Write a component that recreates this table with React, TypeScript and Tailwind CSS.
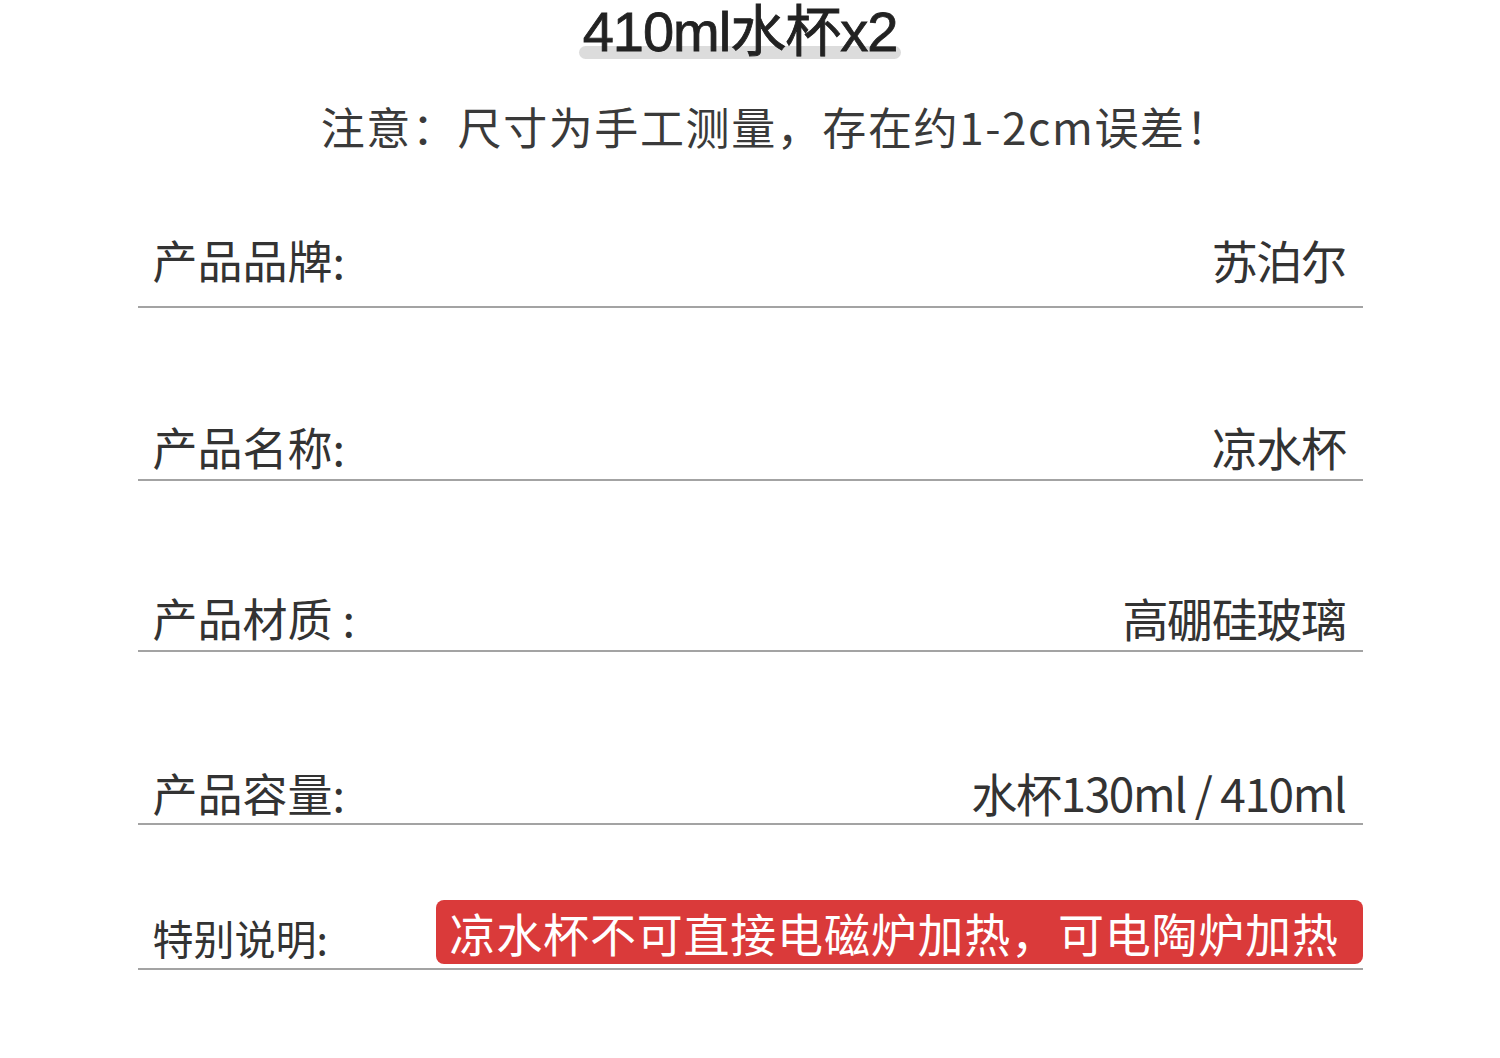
const cjk = "font-['Noto_Sans_CJK_SC','Noto_Sans',sans-serif]";

type Row = { label: string; value: string; h: string; pb: string };

const rows: Row[] = [
  { label: "产品品牌:", value: "苏泊尔", h: "h-[156px]", pb: "pb-[24px]" },
  { label: "产品名称:", value: "凉水杯", h: "h-[173px]", pb: "pb-[10px]" },
  { label: "产品材质 :", value: "高硼硅玻璃", h: "h-[171px]", pb: "pb-[10px]" },
  { label: "产品容量:", value: "水杯130ml / 410ml", h: "h-[173px]", pb: "pb-[8px]" },
];

const SpecRow = ({ label, value, h, pb }: Row) => (
  <div
    className={`flex items-end justify-between border-b-2 border-[#a3a3a3] ${h} ${pb} pl-[15px] pr-[17px]`}
  >
    <span className="text-[45px] leading-none text-[#333]">{label}</span>
    <span className="text-[46px] leading-none tracking-[-1.4px] text-[#333]">{value}</span>
  </div>
);

export default function App() {
  return (
    <div className={`w-[1500px] h-[1058px] bg-white ${cjk}`}>
      <div className="flex justify-center pr-[20px] pt-[2px]">
        <div className="relative inline-block px-[4px]">
          <span className="absolute left-0 right-0 top-[44px] h-[13px] rounded-full bg-[#dcdcdc]" />
          <span className="relative block font-['Liberation_Sans','Noto_Sans_CJK_SC',sans-serif] text-[56px] leading-[60px] tracking-[-1px] text-[#222] [-webkit-text-stroke:0.8px_#222]">
            410ml水杯x2
          </span>
        </div>
      </div>

      <p className="mt-[38px] pl-[52px] text-center text-[44px] leading-[52px] tracking-[1.6px] text-[#3a3a3a]">
        注意：尺寸为手工测量，存在约1-2cm误差！
      </p>

      <div className="mx-auto w-[1225px]">
        {rows.map((r) => (
          <SpecRow key={r.label} {...r} />
        ))}

        <div className="flex items-end border-b-2 border-[#a3a3a3] h-[145px] pb-[4px]">
          <span className="w-[298px] pl-[15px] pb-[6px] text-[41px] leading-none text-[#333]">
            特别说明:
          </span>
          <div className="flex h-[64px] flex-1 items-center rounded-[8px] bg-[#da3a3a] pl-[14px]">
            <span className="text-[46px] leading-none tracking-[0.8px] text-white">
              凉水杯不可直接电磁炉加热，可电陶炉加热
            </span>
          </div>
        </div>
      </div>
    </div>
  );
}
